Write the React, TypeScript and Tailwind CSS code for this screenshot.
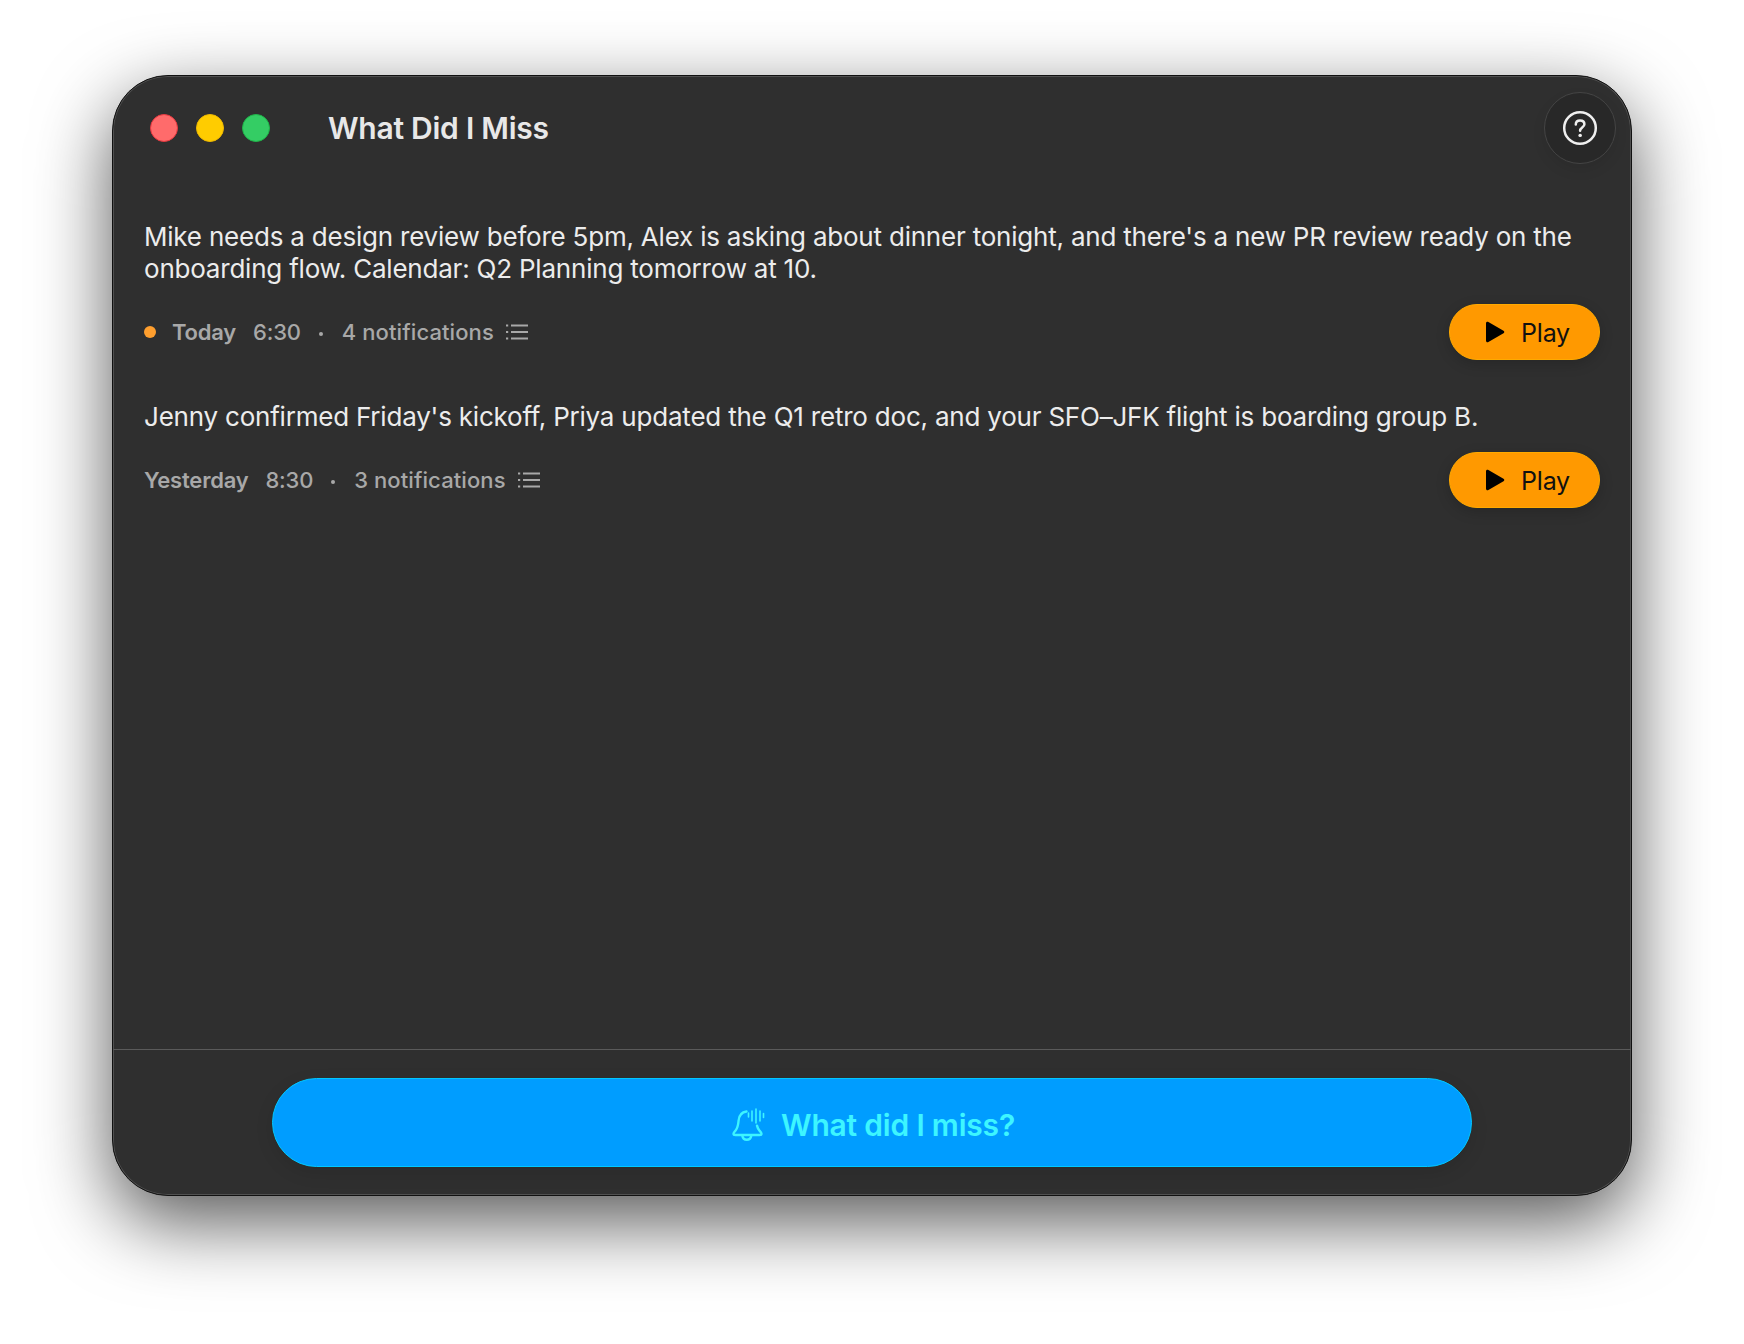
export default function App() {
  return <Page />;
}

function ListIcon() {
  return (
    <svg width="24" height="18" viewBox="0 0 24 18" fill="none" stroke="#a8a8a8" strokeWidth="1.800" strokeLinecap="butt">
      <path d="M6 2.500h17M6 9h17M6 15.500h17" />
      <path d="M1 2.500h2.200M1 9h2.200M1 15.500h2.200" strokeWidth="2.200" />
    </svg>
  );
}

function MetaRow({ day, time, count, dot }: { day: string; time: string; count: string; dot?: boolean }) {
  return (
    <div className="flex items-center justify-between">
      <div className="flex items-center text-[22px] font-medium text-[#a8a8a8]">
        {dot && <span className="w-3 h-3 rounded-full bg-[#ff9f2e] mr-[16px]" />}
        <span className="font-semibold">{day}</span>
        <span className="ml-[17px]">{time}</span>
        <span className="ml-[18px] w-[4px] h-[4px] rounded-full bg-[#a8a8a8] mt-[3px]" />
        <span className="ml-[19px] tracking-[0.1px]">{count}</span>
        <span className="ml-[11px] flex"><ListIcon /></span>
      </div>
      <button className="w-[151px] h-[56px] rounded-full bg-[#ff9900] border border-[#ffaa00] shadow-[0_4px_14px_rgba(0,0,0,0.18)] flex items-center justify-center gap-[16px] pl-[6px] text-[25px] text-[#111]">
        <svg width="20" height="22" viewBox="0 0 20 22">
          <path d="M1 2.200C1 .900 2.300.300 3.400 1L18.500 9.800c1 .600 1 1.900 0 2.500L3.400 21C2.300 21.700 1 21.100 1 19.800Z" fill="#000" />
        </svg>
        <span className="pt-[1px]">Play</span>
      </button>
    </div>
  );
}

function Page() {
  return (
    <div className="w-full h-[1344px] bg-white flex justify-center pt-[75px] font-['Inter',sans-serif]">
      <div className="w-[1520px] h-[1121px] rounded-[56px] bg-[#2f2f2f] border border-[#111] flex flex-col overflow-hidden shadow-[0_26px_76px_rgba(0,0,0,0.66),inset_0_0_0_1px_rgba(255,255,255,0.16)] relative">
        <header className="h-[104px] flex items-center pl-[37px] pr-[15px] shrink-0">
          <span className="w-7 h-7 rounded-full bg-[#ff6b6b] border border-[#e8383f]" />
          <span className="w-7 h-7 rounded-full bg-[#ffcc00] ml-[18px] border border-[#eeb900]" />
          <span className="w-7 h-7 rounded-full bg-[#34cd64] ml-[18px] border border-[#1fb449]" />
          <h1 className="ml-[58px] text-[30px] font-semibold text-[#e8e8e8] tracking-[-0.25px]">What Did I Miss</h1>
          <button className="ml-auto w-[72px] h-[72px] rounded-full bg-[#282828] border border-[#454545] flex items-center justify-center shadow-[0_6px_14px_rgba(0,0,0,0.08)]">
            <svg width="36" height="36" viewBox="0 0 36 36" fill="none" stroke="#efefef" strokeWidth="2.500" strokeLinecap="round">
              <circle cx="18" cy="18" r="15.800" />
              <path d="M13.800 14.500c0-2.400 1.800-4 4.300-4s4.300 1.500 4.300 3.800c0 3.200-4.300 3.300-4.300 6.400" />
              <path d="M18.100 25.400h.1" strokeWidth="3.400" />
            </svg>
          </button>
        </header>

        <main className="flex-1 px-[31px] pt-[41px] flex flex-col gap-[41px] text-[26px] leading-[32px] text-[#ececec] tracking-[-0.21px]">
          <section className="flex flex-col gap-[19px]">
            <p>
              Mike needs a design review before 5pm, Alex is asking about dinner tonight, and there's a new PR review ready on the
              onboarding flow. Calendar: Q2 Planning tomorrow at 10.
            </p>
            <MetaRow dot day="Today" time="6:30" count="4 notifications" />
          </section>
          <section className="flex flex-col gap-[19px]">
            <p>Jenny confirmed Friday's kickoff, Priya updated the Q1 retro doc, and your SFO–JFK flight is boarding group B.</p>
            <MetaRow day="Yesterday" time="8:30" count="3 notifications" />
          </section>
        </main>

        <footer className="h-[146px] shrink-0 border-t border-[#5a5a5a] flex justify-center pt-[28px]">
          <button className="w-[1200px] h-[89px] rounded-full bg-[#009dff] border border-[#00c8ff] shadow-[0_6px_18px_rgba(0,0,0,0.1)] flex items-center justify-center gap-[15px] pl-[3px] text-[30px] font-semibold text-[#3df5ff] tracking-[-0.2px]">
            <svg width="34" height="34" viewBox="0 0 34 34" fill="none" stroke="#3df5ff" strokeWidth="2.400" strokeLinecap="round" strokeLinejoin="round" className="mt-[5px]">
              <path d="M14.500 3.500C9.500 4.200 7 8 6.600 12.500c-.4 4.500-1 7.600-3 10-1 1.200-2.100 2.300-2.100 3.200 0 .9.800 1.300 2 1.300h24c1.200 0 2-.4 2-1.300 0-.9-1-2-2-3.100-1.200-1.400-2-2.900-2.500-5" />
              <path d="M10.300 27.500c.4 2.700 2.200 4.300 4.500 4.300s4.100-1.600 4.500-4.300" />
              <path d="M16.500 5v4M20 3v10M24 1v14M28 3v10M31.500 5.500v4" strokeWidth="1.600" />
            </svg>
            <span className="pt-[6px]">What did I miss?</span>
          </button>
        </footer>
      </div>
    </div>
  );
}
